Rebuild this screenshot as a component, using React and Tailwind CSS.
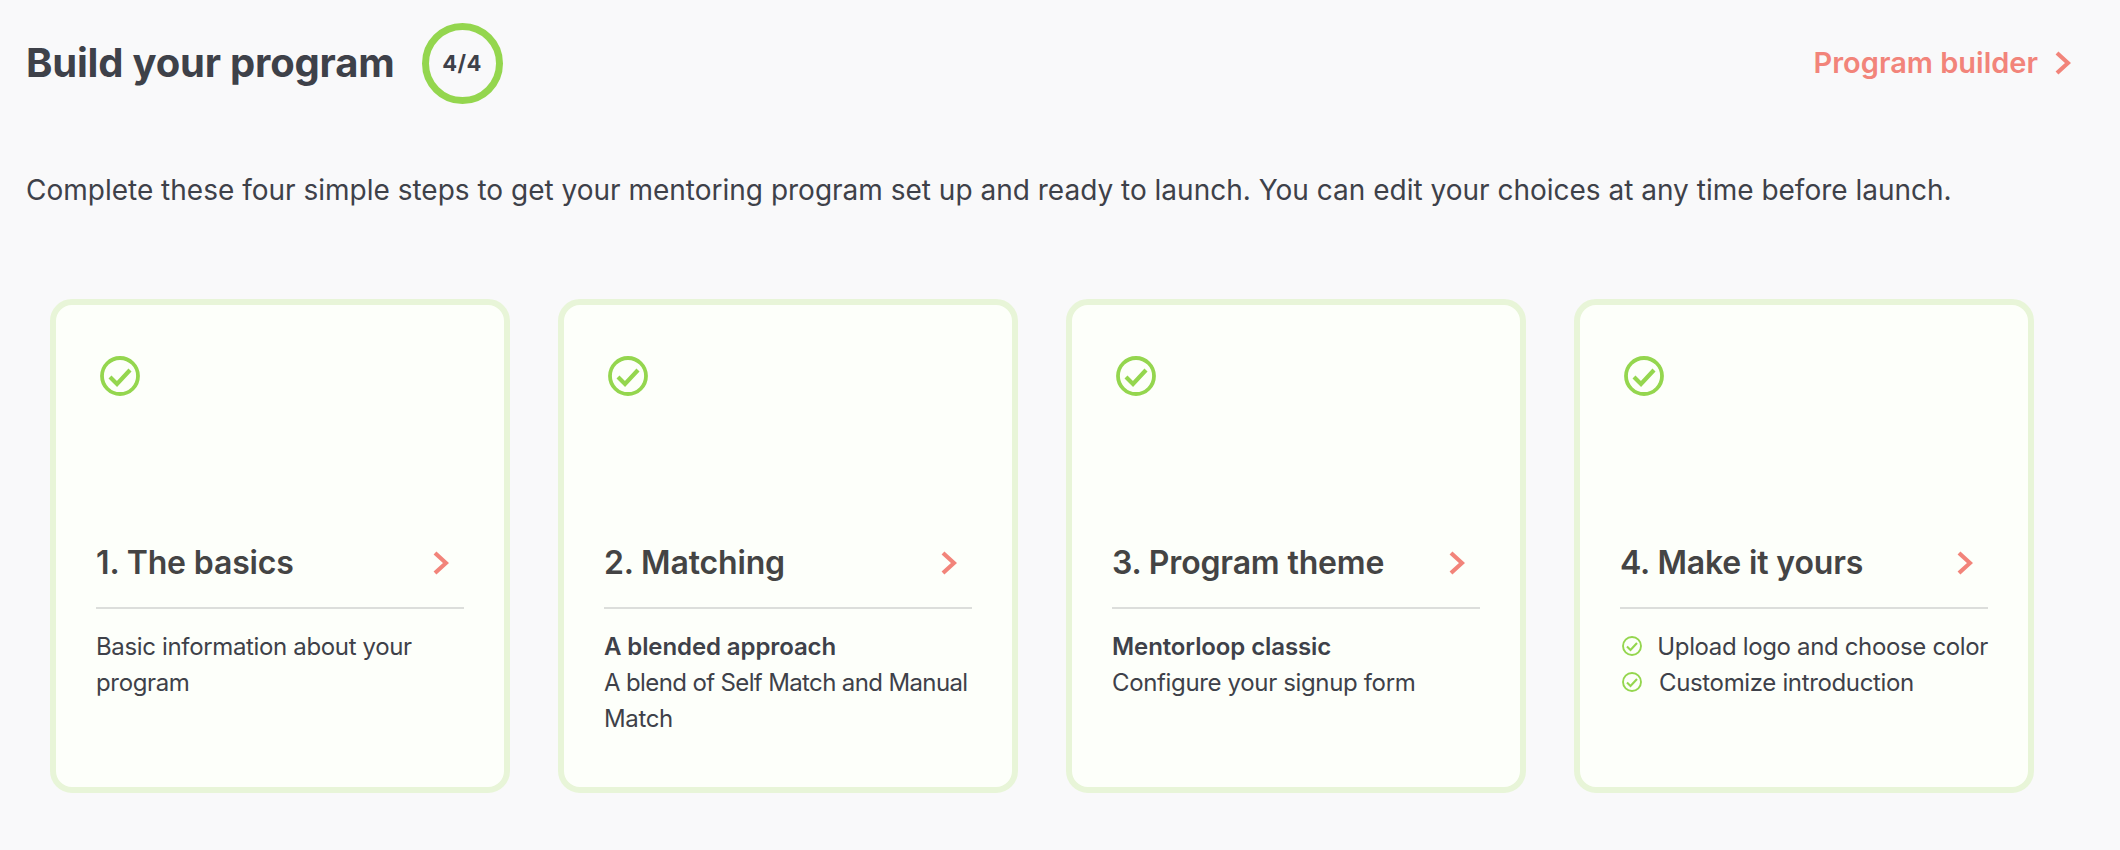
const font = "[font-family:Inter,'Noto_Sans',sans-serif]";

const Chevron = ({ className }) => (
  <svg className={className} viewBox="0 0 16 24" fill="none" stroke="#f2847a" strokeWidth="4.2">
    <polyline points="2,2 13,12 2,22" />
  </svg>
);

const CheckCircle = ({ size }) => (
  <svg width={size} height={size} viewBox="0 0 40 40" fill="none" stroke="#94d64e" strokeWidth="3.8" className="shrink-0">
    <circle cx="20" cy="20" r="18" />
    <polyline points="10,21 17,28 30,14" strokeWidth="4.2" />
  </svg>
);

const steps = [
  { title: "1. The basics", lines: ["Basic information about your", "program"] },
  { title: "2. Matching", bold: "A blended approach", lines: ["A blend of Self Match and Manual", "Match"], tight: true },
  { title: "3. Program theme", bold: "Mentorloop classic", lines: ["Configure your signup form"] },
  { title: "4. Make it yours", checks: ["Upload logo and choose color", "Customize introduction"] },
];

function StepCard({ step }) {
  return (
    <div className="w-[460px] h-[494px] shrink-0 rounded-[22px] border-[6px] border-[#e8f5d8] bg-[#fdfffa] pt-[51px] px-[40px] flex flex-col">
      <div className="pl-[4px]"><CheckCircle size={40} /></div>
      <div className="mt-[147px] flex items-center justify-between h-[40px] pr-[15px]">
        <h3 className="text-[32px] font-semibold text-[#444444] tracking-[-0.15px]">{step.title}</h3>
        <Chevron className="w-[16px] h-[24px]" />
      </div>
      <div className="mt-[24px] h-[2px] bg-[#dcdedb]" />
      <div className="mt-[20px] text-[24px] leading-[36px] text-[#3e4149] tracking-[-0.35px] whitespace-nowrap">
        {step.bold && <div className="font-semibold tracking-[-0.1px]">{step.bold}</div>}
        {step.lines && step.lines.map((l, i) => (
          <div key={l} className={step.tight && i === 0 ? "tracking-[-0.63px]" : ""}>{l}</div>
        ))}
        {step.checks && step.checks.map((c) => (
          <div key={c} className="flex items-center">
            <div className="pl-[2px] w-[39px] -mt-[2px]"><CheckCircle size={20} /></div>
            {c}
          </div>
        ))}
      </div>
    </div>
  );
}

export default function App() {
  return (
    <div className={`${font} w-[2120px] h-[850px] bg-[#f9f9fa] pt-[23px] overflow-hidden`}>
      <div className="flex items-center justify-between pl-[26px] pr-[49px]">
        <div className="flex items-center">
          <h1 className="text-[40px] font-bold text-[#3e4149] tracking-[-0.2px] pb-[2px]">Build your program</h1>
          <div className="ml-[27px] w-[81px] h-[81px] rounded-full border-[7px] border-[#94d64e] flex items-center justify-center text-[22px] font-bold text-[#3e4149] tracking-[0.4px]">4/4</div>
        </div>
        <div className="flex items-center">
          <span className="text-[29px] font-semibold text-[#f2847a] pb-[2px]">Program builder</span>
          <Chevron className="ml-[17px] w-[16px] h-[24px] -mt-[1px]" />
        </div>
      </div>
      <p className="mt-[66px] ml-[26px] text-[28px] leading-[40px] text-[#3e4149] whitespace-nowrap">
        Complete these four simple steps to get your mentoring program set up and ready to launch. You can edit your choices at any time before launch.
      </p>
      <div className="mt-[89px] ml-[50px] flex gap-[48px]">
        {steps.map((s) => <StepCard key={s.title} step={s} />)}
      </div>
    </div>
  );
}
